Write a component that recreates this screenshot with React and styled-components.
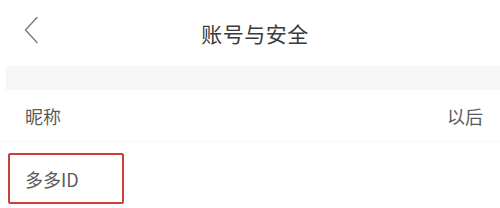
import React from "react";
import styled, { createGlobalStyle } from "styled-components";

const GlobalStyle = createGlobalStyle`
  html, body {
    margin: 0;
    padding: 0;
    background: #fff;
  }
  body {
    font-family: "Noto Sans CJK SC", "Noto Sans", sans-serif;
  }
`;

const BackIcon = () => (
  <svg width="18" height="28" viewBox="0 0 18 28" fill="none">
    <path d="M15 1.5 L3.5 14 L15 26.5" stroke="#7a7a7a" strokeWidth="1.4" strokeLinecap="round" strokeLinejoin="round" />
  </svg>
);

const App = () => {
  return (
    <Page>
      <GlobalStyle />
      <Header>
        <BackButton>
          <BackIcon />
        </BackButton>
        <Title>账号与安全</Title>
      </Header>
      <Divider />
      <Row>
        <Label>昵称</Label>
        <Value>以后</Value>
      </Row>
      <Row $highlight>
        <Label>多多ID</Label>
        <Highlight />
      </Row>
    </Page>
  );
};

export default App;

const Page = styled.div`
  width: 500px;
  height: 208px;
  overflow: hidden;
  background: #fff;
`;

const Header = styled.header`
  position: relative;
  height: 66px;
  display: flex;
  align-items: center;
  justify-content: center;
`;

const BackButton = styled.div`
  position: absolute;
  left: 22px;
  top: 16px;
  display: flex;
`;

const Title = styled.h1`
  margin: 0 0 0 10px;
  font-size: 21px;
  font-weight: 400;
  color: #3a3a3a;
  letter-spacing: 0.5px;
  line-height: 1;
`;

const Divider = styled.div`
  height: 24px;
  margin-left: 6px;
  background: #f5f6f7;
`;

const Row = styled.div`
  position: relative;
  height: ${(p) => (p.$highlight ? "70px" : "52px")};
  display: flex;
  align-items: ${(p) => (p.$highlight ? "flex-start" : "center")};
  justify-content: space-between;
  padding: ${(p) => (p.$highlight ? "28px 17px 0 25px" : "0 17px 0 25px")};
  border-bottom: ${(p) => (p.$highlight ? "none" : "1px solid #f8f8f8")};
  box-sizing: border-box;
`;

const Label = styled.span`
  font-size: 18px;
  color: #5a5a5a;
  line-height: 1;
`;

const Value = styled.span`
  font-size: 18px;
  color: #5a5a5a;
  line-height: 1;
`;

const Highlight = styled.div`
  position: absolute;
  left: 8px;
  top: 11px;
  width: 116px;
  height: 51px;
  border: 2px solid #c9403a;
  border-radius: 2px;
  box-sizing: border-box;
`;
